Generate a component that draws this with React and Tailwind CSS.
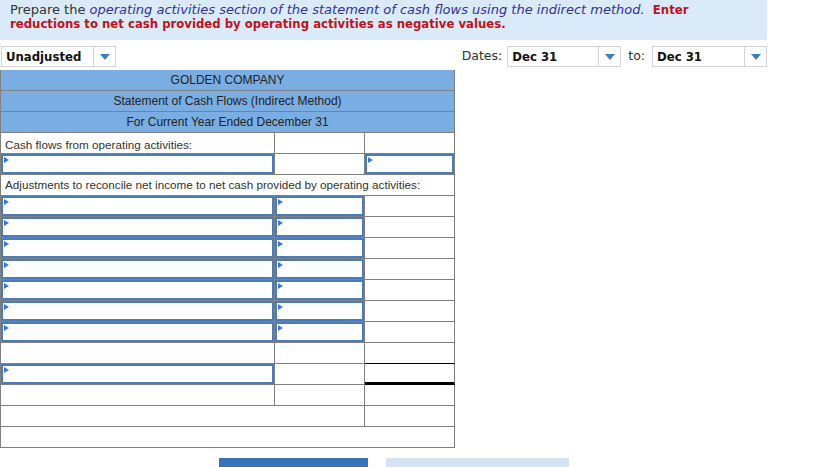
import React from "react";

const verdana = { fontFamily: '"DejaVu Sans", Verdana, sans-serif' };
const narrowBold = { fontFamily: '"DejaVu Sans Condensed", "DejaVu Sans", Tahoma, sans-serif' };

const Arrow = () => (
  <svg width="6" height="7" viewBox="0 0 6 7" className="absolute left-[1px] top-[1px]">
    <path d="M0 0 L5 3 L0 6 Z" fill="#3a78d0" />
  </svg>
);

const Input = ({ arrow = true }) => (
  <div className="relative h-full w-full border-2 border-[#4a7cbc] bg-white">
    {arrow && <Arrow />}
  </div>
);

const Select = ({ label, width }) => (
  <div
    className="flex h-[21px] items-stretch border border-[#d4d4d4] bg-white"
    style={{ width }}
  >
    <div className="flex flex-1 items-center pl-[4px] text-[13px] font-bold text-[#111]" style={narrowBold}>
      {label}
    </div>
    <div className="flex w-[22px] items-center justify-center border-l border-[#d4d4d4]">
      <svg width="10" height="6" viewBox="0 0 10 6">
        <path d="M0 0 L10 0 L5 6 Z" fill="#3b7cc4" />
      </svg>
    </div>
  </div>
);

// one table row: 3 cells with gray separators
const Row = ({ c1, c2, c3, c3Class = "border-b border-[#808080]" }) => (
  <div className="flex h-[21px]">
    <div className="h-full w-[274px] border-r border-b border-[#808080]">{c1}</div>
    <div className="h-full w-[90px] border-r border-b border-[#808080]">{c2}</div>
    <div className={`h-full w-[90px] border-r border-[#808080] ${c3Class}`}>{c3}</div>
  </div>
);

const HeadRow = ({ children }) => (
  <div className="flex h-[21px] items-center justify-center border-r border-b border-[#808080] bg-[#7aaee3] text-[12px] text-[#222]">
    {children}
  </div>
);

export default function App() {
  return (
    <div className="min-h-[467px] w-[831px] overflow-hidden bg-white text-[#333]">
      {/* instructions */}
      <div
        className="h-[40px] w-[767px] bg-[#dbeaf8] pl-[10px] pr-[70px] pt-[3px] text-[13px] leading-[14px]"
        style={verdana}
      >
        Prepare the{" "}
        <i className="text-[#30329a]">
          operating activities section of the statement of cash flows using the indirect method.
        </i>
        {"\u00a0 "}
        <b className="text-[#c1121b]" style={narrowBold}>
          Enter reductions to net cash provided by operating activities as negative values.
        </b>
      </div>

      {/* selectors */}
      <div className="mt-[6px] flex w-[767px] items-center justify-between pl-[1px]" style={verdana}>
        <Select label="Unadjusted" width={115} />
        <div className="flex items-center">
          <span className="mr-[5px] text-[12.5px] text-[#333]">Dates:</span>
          <Select label="Dec 31" width={114} />
          <span className="ml-[7px] mr-[7px] text-[12.5px] text-[#333]">to:</span>
          <Select label="Dec 31" width={115} />
        </div>
      </div>

      {/* statement table */}
      <div
        className="mt-[3px] w-[455px] border-l border-[#808080]"
        style={{ fontFamily: '"Liberation Sans", Arial, sans-serif' }}
      >
        <HeadRow>GOLDEN COMPANY</HeadRow>
        <HeadRow>Statement of Cash Flows (Indirect Method)</HeadRow>
        <HeadRow>For Current Year Ended December 31</HeadRow>

        <Row
          c1={<div className="pl-[4px] pt-[3px] text-[11.7px] text-[#333]">Cash flows from operating activities:</div>}
        />
        <Row c1={<Input />} c3={<Input />} />
        <div className="flex h-[21px] items-center border-r border-b border-[#808080] pl-[4px] text-[11.7px] text-[#333]">
          Adjustments to reconcile net income to net cash provided by operating activities:
        </div>
        {[0, 1, 2, 3, 4, 5, 6].map((i) => (
          <Row key={i} c1={<Input />} c2={<Input />} />
        ))}
        <Row c3Class="border-b border-b-black" />
        <Row c1={<Input />} c3Class="border-b-[3px] border-b-black" />
        <Row />
        <div className="flex h-[21px]">
          <div className="h-full w-[365px] border-r border-b border-[#808080]" />
          <div className="h-full w-[90px] border-r border-b border-[#808080]" />
        </div>
        <div className="h-[21px] border-r border-b border-[#808080]" />
      </div>

      {/* buttons */}
      <div className="mt-[10px] flex">
        <div className="ml-[219px] h-[30px] w-[149px] bg-[#3a74b8]" />
        <div className="ml-[18px] h-[30px] w-[183px] bg-[#d6e3f3]" />
      </div>
    </div>
  );
}
